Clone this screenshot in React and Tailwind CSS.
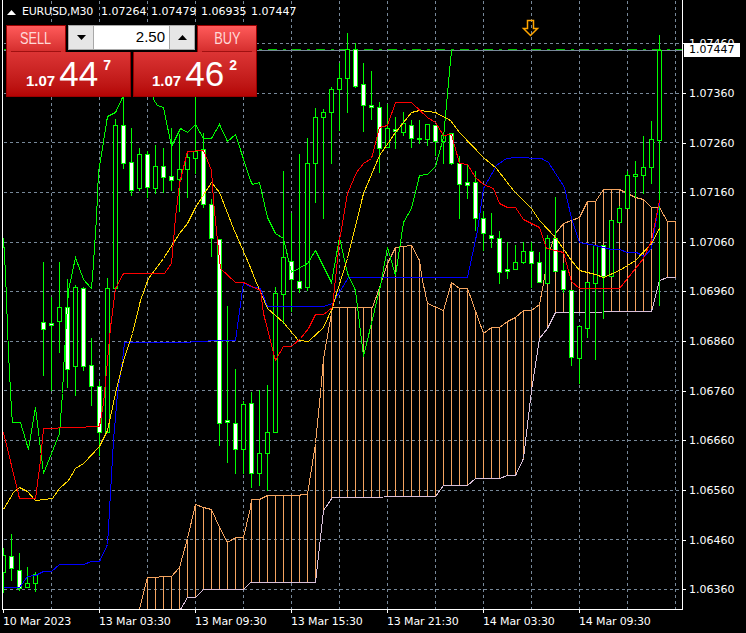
// App.jsx - EURUSD M30 chart with Ichimoku lines
import React from 'react'

// [high, low, bodyTop, bodyBottom, white] one row per bar, bar k sits at x = 3 + 8k
const bars = [
  [547, 592, 555, 572, 0], [533, 580, 556, 568, 1], [552, 590, 570, 588, 1], [566, 587, 583, 587, 0],
  [571, 591, 574, 583, 0], [261, 375, 322, 329, 1], [296, 390, 323, 325, 1], [261, 352, 307, 321, 0],
  [278, 387, 307, 369, 1], [284, 395, 287, 366, 0], [286, 370, 288, 366, 1], [337, 405, 365, 386, 1],
  [380, 455, 386, 432, 1], [277, 432, 288, 432, 0], [118, 288, 125, 288, 0], [90, 168, 125, 163, 1],
  [127, 195, 162, 190, 1], [147, 190, 154, 188, 0], [150, 197, 154, 187, 1], [144, 193, 166, 188, 0],
  [147, 192, 166, 177, 1], [127, 190, 176, 180, 1], [133, 211, 169, 179, 0], [150, 197, 157, 169, 0],
  [90, 173, 151, 158, 0], [132, 207, 149, 204, 1], [198, 256, 204, 238, 1], [239, 445, 239, 423, 1],
  [305, 462, 420, 422, 1], [368, 473, 423, 449, 1], [400, 473, 404, 449, 0], [391, 487, 403, 473, 1],
  [389, 485, 453, 473, 0], [384, 490, 432, 453, 0], [286, 432, 293, 432, 0], [170, 323, 257, 294, 0],
  [212, 311, 261, 279, 1], [153, 292, 281, 288, 1], [137, 290, 163, 287, 0], [107, 202, 117, 163, 0],
  [108, 218, 112, 117, 0], [86, 163, 89, 112, 0], [62, 130, 78, 89, 0], [32, 112, 49, 78, 0],
  [42, 87, 49, 86, 1], [62, 131, 84, 105, 1], [70, 119, 105, 107, 1], [101, 172, 107, 148, 1],
  [103, 147, 128, 147, 0], [116, 148, 129, 131, 1], [111, 135, 123, 132, 0], [119, 147, 125, 138, 1],
  [119, 143, 138, 139, 0], [124, 145, 124, 139, 0], [125, 155, 125, 141, 1], [132, 163, 135, 141, 0],
  [132, 164, 133, 163, 1], [155, 218, 163, 184, 1], [163, 198, 182, 185, 1], [170, 230, 182, 218, 1],
  [210, 250, 218, 233, 1], [212, 247, 235, 238, 1], [230, 283, 238, 272, 1], [241, 278, 269, 271, 1],
  [244, 269, 262, 269, 0], [241, 263, 251, 262, 0], [241, 287, 251, 263, 1], [251, 282, 262, 282, 1],
  [234, 283, 238, 283, 0], [196, 271, 238, 271, 1], [262, 292, 270, 289, 1], [290, 365, 290, 357, 1],
  [326, 383, 326, 358, 0], [282, 337, 282, 328, 0], [245, 359, 245, 283, 0], [245, 318, 245, 276, 1],
  [220, 276, 220, 276, 0], [205, 222, 208, 222, 0], [170, 208, 175, 208, 0], [160, 197, 174, 176, 0],
  [135, 193, 167, 175, 0], [120, 183, 139, 167, 0], [34, 305, 50, 140, 0],
]

const chikou = [[3,238],[5,273],[8,353],[11,410],[12,422],[20,422],[28,449],[35,407],[43,473],[59,433],[62,393],[63,370],[65,337],[68,290],[75,257],[83,279],[91,288],[93,263],[96,217],[98,172],[100,160],[107,116],[115,112],[122,97],[124,90],[151,90],[153,99],[157,105],[163,107],[171,146],[180,128],[187,132],[195,124],[203,138],[211,138],[219,124],[227,141],[235,134],[250,180],[252,184],[259,182],[267,217],[275,233],[283,238],[291,272],[307,263],[315,250],[331,282],[339,237],[347,273],[355,290],[363,356],[380,285],[387,247],[395,275],[403,222],[411,208],[419,175],[427,174],[435,166],[443,137],[447,93],[451,50]]

const tenkan = [[3,432],[19,498],[35,498],[40,460],[43,428],[72,427],[99,426],[103,403],[107,360],[110,327],[115,288],[123,273],[164,273],[171,263],[175,217],[179,183],[187,151],[203,150],[211,170],[213,200],[217,240],[220,268],[235,282],[243,282],[260,290],[263,313],[275,360],[283,346],[291,346],[300,338],[308,328],[315,314],[323,314],[332,307],[339,240],[347,193],[356,172],[363,163],[371,158],[379,127],[387,125],[395,102],[411,102],[427,117],[435,122],[443,135],[451,134],[459,163],[467,164],[475,177],[483,184],[493,188],[499,203],[507,207],[515,207],[523,219],[539,227],[546,248],[555,250],[563,252],[571,281],[579,288],[619,288],[627,278],[635,268],[643,258],[651,240],[659,200]]

const kijun = [[3,509],[13,492],[19,487],[27,491],[35,500],[52,498],[59,488],[68,480],[75,468],[83,463],[99,446],[107,430],[115,393],[123,360],[132,333],[140,300],[148,278],[163,258],[179,233],[187,223],[195,207],[211,182],[219,192],[233,228],[250,267],[255,280],[267,308],[283,322],[298,340],[308,341],[323,327],[332,307],[337,290],[347,258],[363,193],[379,155],[395,132],[411,112],[419,110],[435,112],[450,120],[459,132],[483,157],[496,168],[513,190],[531,208],[539,220],[555,237],[571,260],[579,270],[595,274],[603,277],[619,270],[635,260],[651,243],[659,228]]

const blue = [[3,587],[19,587],[27,576],[35,575],[43,571],[51,571],[59,564],[83,564],[91,561],[99,561],[107,544],[109,510],[113,440],[117,393],[122,360],[124,342],[190,342],[191,341],[207,341],[208,340],[235,340],[243,282],[249,286],[260,288],[267,306],[323,306],[332,303],[340,290],[348,277],[467,277],[477,230],[483,188],[496,165],[506,158],[516,157],[541,158],[548,162],[564,187],[571,218],[579,242],[595,245],[611,249],[619,249],[627,252],[636,252],[644,256],[651,248],[656,217],[659,203]]

const spanA = [[139,609],[147,577],[171,576],[179,567],[187,538],[195,504],[203,507],[211,509],[219,527],[227,542],[235,537],[243,537],[250,507],[251,499],[259,499],[267,495],[293,495],[307,494],[315,443],[320,393],[323,358],[332,307],[372,307],[379,287],[387,263],[395,247],[411,245],[419,260],[422,280],[427,303],[443,310],[451,282],[459,288],[467,288],[483,333],[491,327],[499,327],[507,321],[515,317],[523,310],[531,310],[539,304],[543,283],[547,257],[555,233],[563,223],[579,217],[587,201],[595,201],[603,189],[619,189],[627,193],[635,197],[643,199],[651,207],[659,207],[667,221],[675,221]]

const spanB = [[180,609],[187,597],[195,597],[203,589],[243,589],[250,582],[315,582],[320,537],[323,510],[332,497],[435,496],[443,485],[467,485],[475,478],[499,478],[507,475],[515,475],[523,458],[531,390],[539,338],[547,328],[555,312],[651,311],[659,280],[667,277],[675,277]]

const prices = ['1.07460','1.07360','1.07260','1.07160','1.07060','1.06960','1.06860','1.06760','1.06660','1.06560','1.06460','1.06360']
const times = ['10 Mar 2023','13 Mar 03:30','13 Mar 09:30','13 Mar 15:30','13 Mar 21:30','14 Mar 03:30','14 Mar 09:30']

const gridY = prices.map((_, i) => Math.round(43 + i * 49.64))
const gridX = [51, 99, 147, 195, 243, 291, 339, 387, 435, 483, 531, 579, 627, 675]
const hatchX = Array.from({ length: 67 }, (_, i) => 147 + i * 8)

const toPoints = (pts) => pts.map((p) => p.join(',')).join(' ')

// y of a polyline at x
const yAt = (pts, x) => {
  if (x <= pts[0][0]) return pts[0][1]
  for (let i = 1; i < pts.length; i++) {
    if (x <= pts[i][0]) {
      const [x0, y0] = pts[i - 1]
      const [x1, y1] = pts[i]
      return Math.round(y0 + ((y1 - y0) * (x - x0)) / (x1 - x0))
    }
  }
  return pts[pts.length - 1][1]
}

function Chart() {
  return (
    <svg width="679" height="609" viewBox="3 0 679 609" className="block" shapeRendering="crispEdges">
      <g transform="translate(0.5 0.5)" fill="none" strokeWidth="1">
        {gridY.map((y) => (
          <line key={y} x1="3" x2="682" y1={y} y2={y} stroke="#778899" strokeDasharray="3 3" />
        ))}
        {gridX.map((x) => (
          <line key={x} x1={x} x2={x} y1="0" y2="609" stroke="#778899" strokeDasharray="3 3" />
        ))}

        {/* cloud */}
        {hatchX.map((x) => (
          <line key={x} x1={x} x2={x} y1={yAt(spanA, x)} y2={yAt(spanB, x)} stroke="#f4a460" />
        ))}
        <polyline points={toPoints(spanA)} stroke="#f4a460" />
        <polyline points={toPoints(spanB)} stroke="#d8bfd8" />

        {/* bid / ask */}
        <line x1="3" x2="682" y1="49" y2="49" stroke="#00c800" strokeDasharray="9 6 3 6" />
        <line x1="3" x2="682" y1="50" y2="50" stroke="#778899" />

        {bars.map(([high, low, top, bottom, white], k) => {
          const x = 3 + 8 * k
          return (
            <g key={k} stroke="#00ff00">
              <line x1={x} x2={x} y1={high} y2={low} />
              <rect x={x - 2} y={top} width="4" height={bottom - top} fill={white ? '#ffffff' : '#000000'} />
            </g>
          )
        })}

        <polyline points={toPoints(blue)} stroke="#0000ff" />
        <polyline points={toPoints(chikou)} stroke="#00ff00" />
        <polyline points={toPoints(kijun)} stroke="#ffd700" />
        <polyline points={toPoints(tenkan)} stroke="#ff0000" />

        {/* sell arrow */}
        <path d="M527 20 H533 V28 H537 L530 35 L523 28 H527 Z" stroke="#ffa500" shapeRendering="auto" strokeWidth="1.5" />
      </g>
    </svg>
  )
}

function Triangle({ up }) {
  return (
    <svg width="9" height="5" viewBox="0 0 9 5">
      <polygon points={up ? '4.5,0 9,5 0,5' : '0,0 9,0 4.5,5'} fill="#000000" />
    </svg>
  )
}

function Quote({ big, tail, left }) {
  return (
    <div className={`flex-1 h-[45px] flex items-baseline ${left} pt-[3px] border border-t-0 border-[#9a0000] bg-linear-to-b from-[#dc3434] to-[#b40404] text-white`}>
      <span className="text-[15px] font-bold">1.07</span>
      <span className="text-[35px] leading-[38px] ml-[4px]">{big}</span>
      <span className="self-start text-[14px] font-bold leading-none mt-[3px] ml-[5px]">{tail}</span>
    </div>
  )
}

function TradePanel() {
  return (
    <div className="absolute left-[6px] top-[25px] w-[251px] flex flex-col bg-black font-['Liberation_Sans',sans-serif]">
      <div className="flex gap-[2px] h-[27px]">
        <div className="w-[60px] px-[4px] border border-b-0 border-[#9a0000] bg-linear-to-b from-[#ff5a5a] to-[#d42c2c]">
          <div className="h-[26px] flex items-center justify-center border-b border-[#a01010] text-[#ffd8d8] text-[16px]">
            <span className="scale-x-80">SELL</span>
          </div>
        </div>
        <div className="w-[127px] h-[25px] flex border border-[#a8a8a8] bg-[#e6e6e6]">
          <div className="w-[24px] flex items-center justify-center"><Triangle /></div>
          <div className="flex-1 flex items-center justify-end pr-[4px] bg-white border-x border-[#a8a8a8] text-[15px] text-black">2.50</div>
          <div className="w-[24px] flex items-center justify-center"><Triangle up /></div>
        </div>
        <div className="w-[60px] px-[4px] border border-b-0 border-[#9a0000] bg-linear-to-b from-[#ff5a5a] to-[#d42c2c]">
          <div className="h-[26px] flex items-center justify-center border-b border-[#a01010] text-[#ffd8d8] text-[16px]">
            <span className="scale-x-80">BUY</span>
          </div>
        </div>
      </div>
      <div className="flex gap-[2px]">
        <Quote big="44" tail="7" left="pl-[19px]" />
        <Quote big="46" tail="2" left="pl-[18px]" />
      </div>
    </div>
  )
}

export default function App() {
  return (
    <div className="relative w-[746px] h-[633px] overflow-hidden bg-black text-white text-[11px] font-['DejaVu_Sans',sans-serif]">
      <div className="flex h-[610px]">
        <div className="ml-[2px] border-l border-r border-b border-white h-[610px]">
          <Chart />
        </div>
        {/* price axis */}
        <div className="flex-1 flex flex-col pt-[19px]">
          {prices.map((p) => (
            <div key={p} className="h-[49.64px] flex-none flex items-center">
              <span className="w-[3px] h-px bg-white" />
              <span className="ml-[3px] leading-none">{p}</span>
            </div>
          ))}
        </div>
      </div>

      {/* time axis */}
      <div className="flex pl-[3px] tracking-[-0.15px]">
        {times.map((t) => (
          <div key={t} className="w-[96px] flex-none">
            <div className="w-px h-[3px] bg-white" />
            <div className="leading-none mt-[3px]">{t}</div>
          </div>
        ))}
      </div>

      {/* symbol line */}
      <div className="absolute left-[7px] top-[5px] flex items-center leading-[14px]">
        <svg width="9" height="5" viewBox="0 0 9 5" className="mr-[6px]">
          <polygon points="4.5,0 9,5 0,5" fill="#ffffff" />
        </svg>
        <span className="tracking-[-0.2px] w-[79px]">EURUSD,M30</span>
        <span className="w-[50px]">1.07264</span>
        <span className="w-[50px]">1.07479</span>
        <span className="w-[50px]">1.06935</span>
        <span>1.07447</span>
      </div>

      <TradePanel />

      {/* current price tag */}
      <div className="absolute left-[684px] top-[43px] w-[56px] h-[14px] pl-[5px] bg-white text-black leading-[14px]">1.07447</div>
    </div>
  )
}
